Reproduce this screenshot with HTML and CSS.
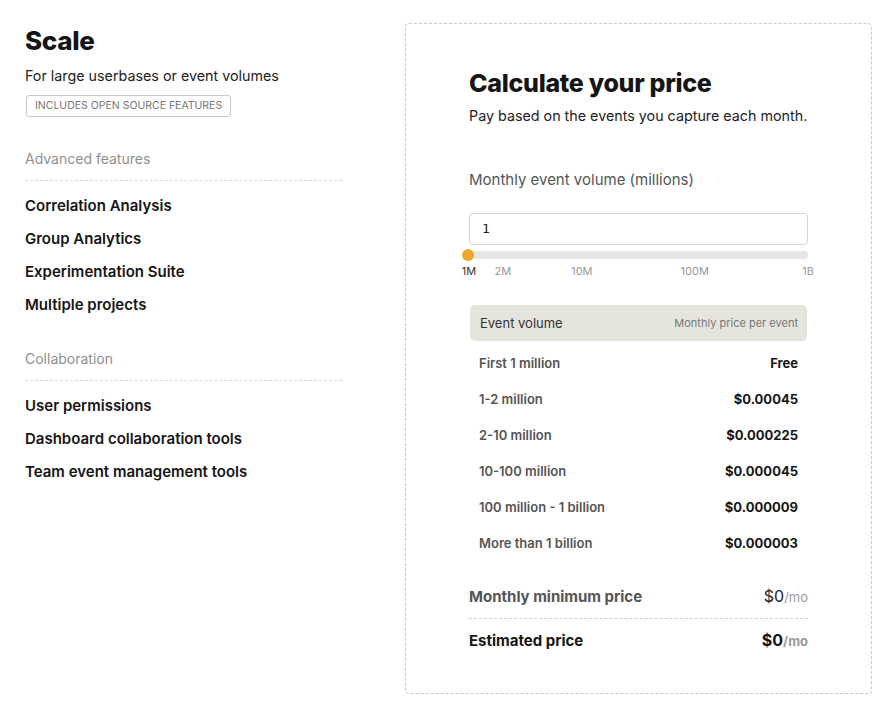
FILE: index.html
```html
<!DOCTYPE html>
<html>
<head>
<meta charset="utf-8">
<link rel="stylesheet" href="styles.css">
</head>
<body>
<div class="page">
  <section class="plan">
    <h1 class="plan-title">Scale</h1>
    <p class="plan-sub">For large userbases or event volumes</p>
    <span class="badge">INCLUDES OPEN SOURCE FEATURES</span>

    <div class="group">
      <div class="group-title">Advanced features</div>
      <ul class="features">
        <li>Correlation Analysis</li>
        <li>Group Analytics</li>
        <li>Experimentation Suite</li>
        <li>Multiple projects</li>
      </ul>
    </div>

    <div class="group">
      <div class="group-title">Collaboration</div>
      <ul class="features">
        <li>User permissions</li>
        <li>Dashboard collaboration tools</li>
        <li>Team event management tools</li>
      </ul>
    </div>
  </section>

  <section class="calc">
    <h2 class="calc-title">Calculate your price</h2>
    <p class="calc-sub">Pay based on the events you capture each month.</p>

    <label class="field-label">Monthly event volume (millions)</label>
    <div class="input">1</div>
    <div class="slider">
      <div class="track"></div>
      <div class="thumb"></div>
    </div>
    <div class="ticks">
      <span class="tick active" style="left:0%">1M</span>
      <span class="tick" style="left:10%">2M</span>
      <span class="tick" style="left:33.3%">10M</span>
      <span class="tick" style="left:66.6%">100M</span>
      <span class="tick" style="left:100%">1B</span>
    </div>

    <div class="table">
      <div class="thead">
        <span class="th-left">Event volume</span>
        <span class="th-right">Monthly price per event</span>
      </div>
      <div class="row"><span>First 1 million</span><b>Free</b></div>
      <div class="row"><span>1-2 million</span><b>$0.00045</b></div>
      <div class="row"><span>2-10 million</span><b>$0.000225</b></div>
      <div class="row"><span>10-100 million</span><b>$0.000045</b></div>
      <div class="row"><span>100 million - 1 billion</span><b>$0.000009</b></div>
      <div class="row"><span>More than 1 billion</span><b>$0.000003</b></div>
    </div>

    <div class="total min">
      <span>Monthly minimum price</span>
      <span class="amount">$0<small>/mo</small></span>
    </div>
    <div class="total est">
      <span>Estimated price</span>
      <span class="amount">$0<small>/mo</small></span>
    </div>
  </section>
</div>
</body>
</html>
```

FILE: styles.css
```css
* { box-sizing: border-box; }
html, body { margin: 0; padding: 0; background: #fff; }
body {
  font-family: Inter, "Noto Sans", sans-serif;
  color: #151515;
}
.page {
  display: flex;
  align-items: flex-start;
  padding: 23px 20px 0 25px;
  gap: 63px;
}
.plan {
  width: 317px;
  padding-top: 4px;
}
.plan-title {
  margin: 0;
  font-size: 26px;
  font-weight: 800;
  line-height: 28px;
  letter-spacing: -0.3px;
}
.plan-sub {
  margin: 12px 0 0;
  font-size: 14.3px;
  line-height: 18px;
  color: #222;
}
.badge {
  display: inline-block;
  margin-top: 10px;
  margin-left: 1px;
  padding: 0 8px;
  height: 22px;
  line-height: 20px;
  border: 1px solid #c8c8c8;
  border-radius: 3px;
  font-size: 10.5px;
  color: #777;
  letter-spacing: 0;
}
.group { margin-top: 33px; }
.group + .group { margin-top: 36px; }
.group-title {
  font-size: 14px;
  color: #8f8f8f;
  line-height: 18px;
  padding-bottom: 12px;
  border-bottom: 1px dashed #d9d9d9;
}
.features {
  list-style: none;
  margin: 0;
  padding: 0;
  padding-top: 16px;
}
.features li {
  font-size: 15px;
  font-weight: 600;
  line-height: 18px;
  margin-bottom: 15px;
  color: #151515;
}
.calc {
  width: 467px;
  border: 1px dashed #c9c9c9;
  border-radius: 4px;
  padding: 44px 63px 43px 63px;
}
.calc-title {
  margin: 0;
  font-size: 25px;
  font-weight: 800;
  line-height: 30px;
  letter-spacing: -0.3px;
}
.calc-sub {
  margin: 9px 0 0;
  font-size: 14.3px;
  line-height: 18px;
  color: #222;
  white-space: nowrap;
}
.field-label {
  display: block;
  margin-top: 46px;
  font-size: 15px;
  line-height: 18px;
  color: #555;
}
.input {
  margin-top: 24px;
  height: 32px;
  border: 1px solid #d4d4d4;
  border-radius: 4px;
  padding: 0 12px;
  font-family: "DejaVu Sans Mono", monospace;
  font-size: 13px;
  line-height: 30px;
  color: #222;
}
.slider {
  position: relative;
  height: 8px;
  margin-top: 6px;
}
.track {
  height: 8px;
  background: #e6e6e6;
  border-radius: 4px;
}
.thumb {
  position: absolute;
  left: -7px;
  top: -2px;
  width: 12px;
  height: 12px;
  border-radius: 50%;
  background: #eca72c;
}
.ticks {
  position: relative;
  height: 14px;
  margin-top: 5px;
  font-size: 11px;
  color: #999;
}
.tick {
  position: absolute;
  top: 0;
  transform: translateX(-50%);
  line-height: 14px;
}
.tick.active { color: #333; }
.table { margin-top: 27px; }
.thead {
  display: flex;
  justify-content: space-between;
  align-items: center;
  height: 36px;
  background: #e5e5de;
  border-radius: 5px;
  padding: 0 9px 0 10px;
  margin: 0 1px;
}
.th-left { font-size: 13px; color: #333; }
.th-right { font-size: 11px; color: #777; }
.row {
  display: flex;
  justify-content: space-between;
  align-items: center;
  height: 36px;
  padding: 0 10px;
  font-size: 13px;
}
.table .thead + .row { margin-top: 4px; }
.row span { color: #555; font-weight: 600; }
.row b { color: #151515; font-weight: 700; }
.total {
  display: flex;
  justify-content: space-between;
  align-items: center;
  font-size: 15px;
  font-weight: 700;
  line-height: 18px;
}
.amount { font-size: 16px; line-height: 18px; }
.total.min {
  margin-top: 26px;
  color: #555;
  padding-bottom: 12px;
  border-bottom: 1px dashed #d0d0d0;
}
.total.min .amount { font-weight: 400; color: #222; }
.total.est {
  margin-top: 12px;
  color: #151515;
}
.amount small {
  font-size: 13px;
  color: #999;
  font-weight: 400;
}
.total.est .amount small { font-weight: 700; }
```
